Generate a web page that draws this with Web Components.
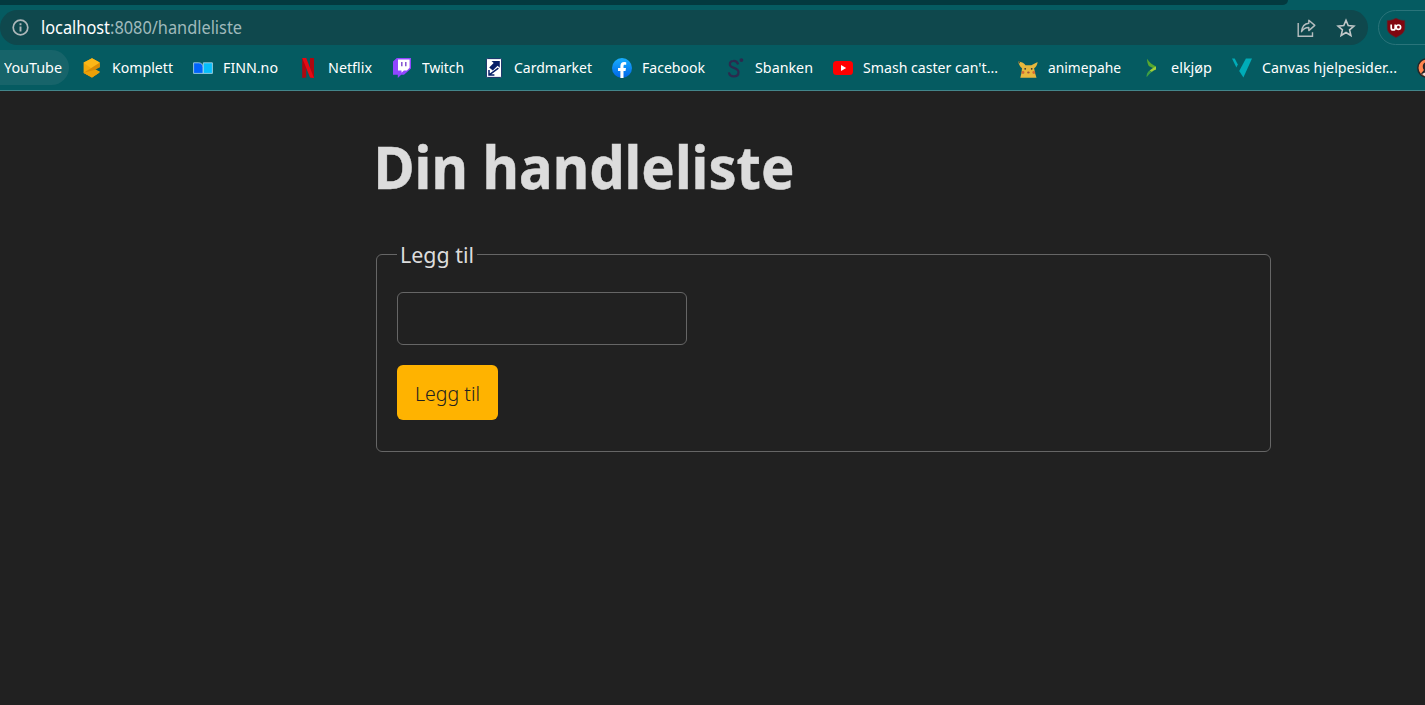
<!DOCTYPE html>
<html lang="no">
<head>
<meta charset="utf-8">
<title>Din handleliste</title>
<style>
html,body{margin:0;height:100%;overflow:hidden;background:#212121}
body{font-family:"Noto Sans","Open Sans",sans-serif}
</style>
</head>
<body>
<app-window></app-window>

<template id="t-window">
<style>
:host{display:flex;flex-direction:column;width:1425px;height:705px;overflow:hidden;background:#212121}
</style>
<browser-tabs></browser-tabs>
<address-row></address-row>
<bookmark-bar></bookmark-bar>
<shopping-page></shopping-page>
</template>

<template id="t-address">
<style>
:host{display:flex;height:40px;padding-top:5px;box-sizing:border-box;background:#055b61;gap:10px;flex:none}
.field{display:flex;align-items:center;box-sizing:border-box;width:1368px;height:35px;border-radius:18px;background:#0f484d;padding:0 12.5px 0 11px;flex:none}
.url{display:flex;flex:1;margin-left:11px;font-size:17.5px;line-height:34px;padding-bottom:2px;color:#9fb9bb}
.url fit-text:first-child{color:#fff}
svg{display:block;flex:none}
.tools{display:flex;gap:18px;align-items:center}
.ext{box-sizing:border-box;width:80px;height:35px;border:1px solid #2a747a;border-radius:18px;padding:7px 0 0 7px;flex:none}
</style>
<div class="field">
<svg width="19" height="19" viewBox="0 0 19 19"><circle cx="9.5" cy="9.5" r="7.3" fill="none" stroke="#aeb8ba" stroke-width="1.7"/><path d="M9.5 8.5v5M9.5 5.3v1.9" stroke="#aeb8ba" stroke-width="1.9"/></svg>
<div class="url"><fit-text w="69">localhost</fit-text><fit-text w="132">:8080/handleliste</fit-text></div>
<div class="tools">
<svg width="22" height="20" viewBox="0 0 22 20" fill="none" stroke="#b5bdbf" stroke-width="1.4"><path d="M2.2 5v13.2H16.5V14.3"/><path d="M12.8 2.2l6 5.2-6 5.2V9.5C9.5 9.4 7.3 10.5 5.5 13.7 6 9 8.5 5.6 12.8 5.2z" stroke-linejoin="round"/></svg>
<svg width="20" height="20" viewBox="0 0 20 20"><path d="M10 2.3l2.2 5.3 5.7.5-4.3 3.8 1.3 5.6L10 14.5l-4.9 3 1.3-5.6-4.3-3.8 5.7-.5z" fill="none" stroke="#c1c7c8" stroke-width="1.6" stroke-linejoin="miter"/></svg>
</div>
</div>
<div class="ext"><svg width="20" height="20" viewBox="0 0 20 20"><path d="M10 0C7.5 1.8 4.5 2.5 1.2 2.4V10c0 4.4 3.6 7 8.8 9.5 5.2-2.5 8.8-5.1 8.8-9.5V2.4C15.5 2.5 12.5 1.8 10 0z" fill="#800610" stroke="#4c3038" stroke-width=".6"/><path d="M5.2 6.6v3.3a2 2 0 0 0 4 0V6.6" fill="none" stroke="#fff" stroke-width="1.7"/><circle cx="12.4" cy="9.2" r="2.2" fill="none" stroke="#fff" stroke-width="1.7"/></svg></div>
</template>

<template id="t-bookmarks">
<style>
:host{display:flex;height:46px;box-sizing:border-box;padding:5px 0 5px;background:#055b61;border-bottom:1px solid #43858a;flex:none;overflow:hidden}
.hot{width:69px;height:35px;box-sizing:border-box;padding-left:4px;background:#17646a;border-radius:0 18px 18px 0;flex:none;margin-right:13px;color:#fff;font-size:14.4px;line-height:35px}
.list{display:flex;gap:20px;flex:none}
</style>
<div class="hot"><fit-text w="58">YouTube</fit-text></div>
<div class="list">
<book-mark w="61" label="Komplett"><svg width="20" height="20" viewBox="0 0 20 20"><path d="M10 .2l7.7 4.4v4.6L10.6 10 18 13.8 10 19.6 1.6 15V4.6z" fill="#f2a90c"/><path d="M1.6 4.7L10 .2l7.7 4.4L9 10.2z" fill="#fbb718"/><path d="M1.6 14.8L9 10.2l8.7-5.4v4.4L12 12.5l5.7 1.8L10 19.6z" fill="#d98b05"/><path d="M1.6 14.8L12.3 12l5.4 2.6L10 19.6z" fill="#eda008"/></svg></book-mark>
<book-mark w="55" label="FINN.no"><svg width="20" height="20" viewBox="0 0 20 20"><path d="M.6 4.8h5.2a4.5 4.5 0 0 1 4.4 4.5v6.1H.6z" fill="#0063fb" stroke="#b7dce8" stroke-width=".8"/><path d="M10.3 4.8h9.1v10.6h-9.1z" fill="#06befb" stroke="#b7dce8" stroke-width=".8"/></svg></book-mark>
<book-mark w="44" label="Netflix"><svg width="20" height="20" viewBox="0 0 20 20"><path d="M4.2 0h4v19.4l-4 .6zM12 0h4v20l-4-.6z" fill="#ad0710"/><path d="M4.2 0h4L16 20l-4-.6z" fill="#e50914"/></svg></book-mark>
<book-mark w="42" label="Twitch"><svg width="20" height="20" viewBox="0 0 20 20"><path d="M4.8 0H19v10.4l-7 6.4H9.2L5.8 20v-3.2H1V3.6z" fill="#9146ff"/><path d="M6 1.4h11.6v8.4l-2.7 2.6h-3l-2.4 2.3v-2.3H6z" fill="#fff"/><path d="M9.8 4v4.3M13.8 4v4.3" stroke="#7b45ce" stroke-width="1.4"/></svg></book-mark>
<book-mark w="78" label="Cardmarket"><svg width="20" height="20" viewBox="0 0 20 20"><rect x="2.4" y=".6" width="15.2" height="18.8" rx="1.2" fill="#fff" stroke="#152d65"/><path d="M7.5 3h8.3v6.8l-2.2-2-4.8 4.7-3.6-3.1L9.7 5z" fill="#071f68"/><path d="M5 12v5h5.4M5.2 16.8l9.2-6.6" fill="none" stroke="#071f68" stroke-width="1.5"/></svg></book-mark>
<book-mark w="63" label="Facebook"><svg width="20" height="20" viewBox="0 0 20 20"><defs><linearGradient id="g" x2="0" y2="1"><stop stop-color="#19afff"/><stop offset="1" stop-color="#0064e7"/></linearGradient></defs><circle cx="10" cy="10" r="10" fill="url(#g)"/><path d="M8.4 20v-7H6v-3h2.4V8.2c0-2.7 1.3-4.2 3.8-4.2l2 .2v2.6h-1.3c-1.2 0-1.4.6-1.4 1.6V10H14l-.5 3h-2v7z" fill="#fff"/></svg></book-mark>
<book-mark w="58" label="Sbanken"><svg width="20" height="20" viewBox="0 0 20 20"><path d="M13.2 6.3C12.3 3.9 10.1 2.8 8.2 3 6.1 3.1 4.8 4.5 4.8 6.3c0 4.8 8.7 2.3 8.7 8 0 2.4-1.9 4.1-4.7 4.1-2.4 0-4.5-1.3-4.9-4" fill="none" stroke="#2c2a4e" stroke-width="2.2"/><circle cx="16.4" cy="2.1" r="1.9" fill="#2c2a4e"/></svg></book-mark>
<book-mark w="135" label="Smash caster can't..."><svg width="20" height="20" viewBox="0 0 20 20"><rect y="3" width="20" height="14" rx="3.5" fill="#f00"/><path d="M8 7v6l5.2-3z" fill="#fff"/></svg></book-mark>
<book-mark w="73" label="animepahe"><svg width="20" height="20" viewBox="0 0 20 20"><path d="M.2 3.5C4 4 6.5 5.3 7.5 7.2h5.8L19.6 4c-.2 3-1.6 5-3.5 6.2l1.1 5.2 1.3 4.4H2.3l1.1-4.5.6-5C2 8.5.7 6.5.2 3.5z" fill="#e7b83d"/><path d="M.2 3.5l2 .4-1 1.9z" fill="#3c4240"/><circle cx="7.2" cy="10.8" r=".9" fill="#343432"/><circle cx="13.7" cy="10.8" r=".9" fill="#343432"/><circle cx="5" cy="14.5" r="1.4" fill="#d46b33"/><circle cx="15.8" cy="14.5" r="1.4" fill="#d46b33"/><ellipse cx="10.4" cy="14.5" rx="1.3" ry="1.1" fill="#9f543b"/></svg></book-mark>
<book-mark w="41" label="elkjøp"><svg width="20" height="20" viewBox="0 0 20 20"><path d="M6 .8c2.3 3.8 5.5 6.1 9 7.7v3.1L7.8 8C6.6 5.8 6 3.3 6 .8z" fill="#58a82f"/><path d="M15 8.5v3.1c-1.6.7-3 1.4-4.3 2.3L8.6 12.4 12 9.9z" fill="#a2ce39"/><path d="M5.6 19.2C5.3 16.5 6.4 14 8.6 12.4l2.1 1.5c-2 1.5-3.6 3.2-5.1 5.3z" fill="#3fa043"/></svg></book-mark>
<book-mark w="135" label="Canvas hjelpesider..."><svg width="20" height="20" viewBox="0 0 20 20"><path d="M13.9.4H20l-8.6 19.2L7.2 13z" fill="#00acb8"/><path d="M0 .4h2.7l3.1 6-1.4 3z" fill="#00acb8"/></svg></book-mark>
<book-mark w="1" label=""><svg width="20" height="20" viewBox="0 0 20 20"><circle cx="10" cy="10" r="9.2" fill="#ff854f" stroke="#252527" stroke-width="1.5"/><path d="M9 4C5.3 5 5 9.5 7 12l-3 3.5c2 2.4 5 3.2 9 2.5V4z" fill="#252527"/><path d="M8.5 8h7v5H9zM5 16l4-2v5z" fill="#f4e1d8"/></svg></book-mark>
</div>
</template>

<template id="t-page">
<style>
:host{display:block;flex:1;padding:35px 154px 0 376px;background:#212121;color:#dcdcdc}
h1{margin:0;font-size:59.5px;line-height:80px;height:81px;font-weight:700;-webkit-text-stroke:.5px #dcdcdc}
</style>
<h1><fit-text w="421" shift="-2.5">Din handleliste</fit-text></h1>
<add-form legend="Legg til"></add-form>
</template>

<template id="t-form">
<style>
:host{display:block;margin-top:32px}
fieldset{box-sizing:border-box;width:895px;height:213px;min-width:0;margin:0;padding:23px 20px 0;border:1px solid #666;border-radius:6px}
legend{padding:0 3px;height:30px;line-height:30px;font-size:22px;color:#dcdcdc}
form{display:flex;flex-direction:column;align-items:flex-start;gap:20px}
input{box-sizing:border-box;width:290px;height:53px;margin:0;background:transparent;border:1px solid #666;border-radius:6px;outline:0;color:#dcdcdc;font:20px "Noto Sans",sans-serif;padding:0 16px}
button{display:block;box-sizing:border-box;width:101px;height:55px;border:0;border-radius:6px;background:#ffb300;color:#212121;padding:3px 0 0 18px;margin:0;text-align:left;font:300 19.6px/52px "Noto Sans","Open Sans",sans-serif}
</style>
<fieldset><legend><fit-text w="74"></fit-text></legend>
<form><input type="text" aria-label="Vare"><button type="button"><fit-text w="65">Legg til</fit-text></button></form>
</fieldset>
</template>

<script>
class Base extends HTMLElement{
  constructor(){
    super();
    this.attachShadow({mode:'open'});
    const id=this.constructor.tpl;
    if(id)this.shadowRoot.append(document.getElementById(id).content.cloneNode(true));
  }
}
/* Single-line label condensed to the width given in w. */
class FitText extends Base{
  connectedCallback(){
    this.shadowRoot.innerHTML='<style>:host{display:inline-block;vertical-align:top;white-space:nowrap;flex:none}span{display:inline-block;transform-origin:0 50%}</style><span><slot></slot></span>';
    this.fit();
    requestAnimationFrame(()=>this.fit());
  }
  fit(){
    const s=this.shadowRoot.querySelector('span'),w=+this.getAttribute('w');
    this.style.width=w+'px';
    const n=parseFloat(getComputedStyle(s).width);
    if(n>0)s.style.transform='translateX('+(+this.getAttribute('shift')||0)+'px) scaleX('+w/n+')';
  }
}
class BrowserTabs extends Base{
  constructor(){
    super();
    this.shadowRoot.innerHTML='<style>:host{display:block;height:5px;background:#055b61;flex:none}div{width:1288px;height:5px;background:#03393f;border-radius:0 0 9px 0}</style><div></div>';
  }
}
class BookMark extends Base{
  connectedCallback(){
    this.shadowRoot.innerHTML='<style>:host{display:flex;height:35px;align-items:center;gap:10px;color:#fff;font-size:14.4px;line-height:35px;flex:none}::slotted(svg){display:block}fit-text{margin-left:-.5px;margin-right:.5px}</style><slot></slot><fit-text></fit-text>';
    const t=this.shadowRoot.querySelector('fit-text');
    t.setAttribute('w',this.getAttribute('w'));
    t.textContent=this.getAttribute('label');
    if(t.fit)t.fit();
  }
}
class AddressRow extends Base{static tpl='t-address'}
class BookmarkBar extends Base{static tpl='t-bookmarks'}
class ShoppingPage extends Base{static tpl='t-page'}
class AddForm extends Base{
  static tpl='t-form';
  connectedCallback(){this.shadowRoot.querySelector('legend fit-text').textContent=this.getAttribute('legend')}
}
class AppWindow extends Base{static tpl='t-window'}
customElements.define('fit-text',FitText);
customElements.define('browser-tabs',BrowserTabs);
customElements.define('book-mark',BookMark);
customElements.define('address-row',AddressRow);
customElements.define('bookmark-bar',BookmarkBar);
customElements.define('add-form',AddForm);
customElements.define('shopping-page',ShoppingPage);
customElements.define('app-window',AppWindow);
</script>
</body>
</html>
